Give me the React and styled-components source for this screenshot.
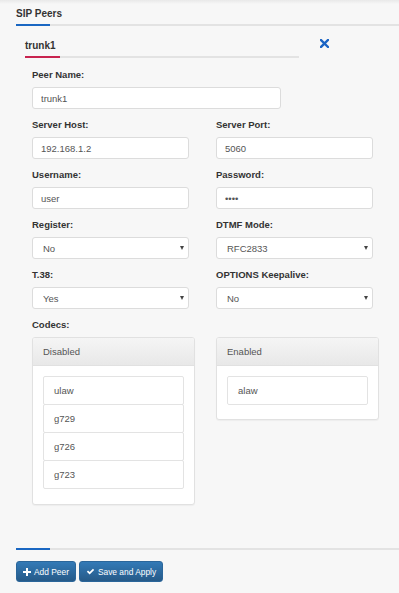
import React from "react";
import styled, { createGlobalStyle } from "styled-components";

const GlobalStyle = createGlobalStyle`
  html, body {
    margin: 0;
    padding: 0;
    background: #f7f7f7;
    font-family: "Liberation Sans", Arial, sans-serif;
    color: #333;
  }
`;

const Page = styled.div`
  position: relative;
  padding: 0 0 0 16px;
  min-height: 593px;
  box-sizing: border-box;
  &:before {
    content: "";
    position: absolute;
    left: 0;
    right: 0;
    top: 0;
    height: 4px;
    background: linear-gradient(#e9e9e9, rgba(247, 247, 247, 0));
  }
`;

const TabLine = styled.div`
  position: relative;
  border-bottom: 2px solid #e3e3e3;
  &:after {
    content: "";
    position: absolute;
    left: 0;
    bottom: -2px;
    width: ${p => p.$w}px;
    height: 2px;
    background: ${p => p.$color};
  }
`;

const Title = styled(TabLine)`
  padding: 7px 0 3px;
  font-size: 10px;
  line-height: 14px;
  font-weight: bold;
  color: #333;
`;

const PeerHead = styled.div`
  display: flex;
  align-items: flex-start;
  margin: 13px 0 0 9px;
`;

const PeerTitle = styled(TabLine)`
  width: 274px;
  padding-bottom: 3px;
  font-size: 10px;
  line-height: 14px;
  font-weight: bold;
`;

const CloseButton = styled.button`
  margin: 0 0 0 21px;
  padding: 0;
  border: 0;
  background: none;
  display: flex;
  cursor: pointer;
`;

const Form = styled.div`
  padding: 10px 0 0 16px;
`;

const Row = styled.div`
  display: grid;
  grid-template-columns: 157px 157px;
  column-gap: 27px;
`;

const Group = styled.div`
  margin-bottom: 9px;
  width: ${p => (p.$wide ? "249px" : "auto")};
`;

const Label = styled.label`
  display: block;
  font-size: 9.5px;
  line-height: 14px;
  font-weight: bold;
  color: #333;
  margin-bottom: 5px;
`;

const Input = styled.input`
  display: block;
  box-sizing: border-box;
  width: 100%;
  height: 22px;
  margin: 0;
  padding: 0 8px;
  border: 1px solid #dcdcdc;
  border-radius: 3px;
  background: #fff;
  font-family: inherit;
  font-size: 9.5px;
  color: #555;
  outline: none;
`;

const SelectWrap = styled.div`
  position: relative;
`;

const Select = styled.select`
  display: block;
  box-sizing: border-box;
  width: 100%;
  height: 22px;
  margin: 0;
  padding: 0 10px;
  border: 1px solid #dcdcdc;
  border-radius: 3px;
  background: #fff;
  font-family: inherit;
  font-size: 9.5px;
  color: #555;
  appearance: none;
  outline: none;
`;

const Caret = styled.span`
  position: absolute;
  right: 5px;
  top: 9px;
  width: 0;
  height: 0;
  border-left: 2.5px solid transparent;
  border-right: 2.5px solid transparent;
  border-top: 4px solid #444;
  pointer-events: none;
`;

const Codecs = styled.div`
  display: grid;
  grid-template-columns: 163px 163px;
  column-gap: 21px;
  align-items: start;
`;

const Panel = styled.div`
  background: #fff;
  border: 1px solid #e1e1e1;
  border-radius: 3px;
  box-shadow: 0 1px 1px rgba(0, 0, 0, 0.04);
  overflow: hidden;
`;

const PanelHead = styled.div`
  height: 27px;
  padding: 0 10px;
  display: flex;
  align-items: center;
  background: linear-gradient(#f5f5f5, #e8e8e8);
  border-bottom: 1px solid #e1e1e1;
  font-size: 9.5px;
  color: #555;
`;

const PanelBody = styled.div`
  padding: 10px 10px ${p => p.$bottom}px;
`;

const ListItem = styled.div`
  box-sizing: border-box;
  height: 29px;
  display: flex;
  align-items: center;
  padding: 0 10px;
  border: 1px solid #e3e3e3;
  border-radius: 2px;
  font-size: 9.5px;
  color: #555;
  background: #fff;
  &:not(:first-child) {
    margin-top: -1px;
  }
`;

const Footer = styled(TabLine)`
  margin-top: 43px;
`;

const Buttons = styled.div`
  display: flex;
  gap: 3px;
  margin-top: 11px;
`;

const Button = styled.button`
  height: 21px;
  padding: 0 6px;
  display: flex;
  align-items: center;
  gap: 3px;
  border: 1px solid #2b669a;
  border-radius: 3px;
  background: linear-gradient(#337ab7, #265a88);
  color: #fff;
  font-family: inherit;
  font-size: 8.4px;
  cursor: pointer;
`;

const PlusIcon = () => (
  <svg width="8" height="8" viewBox="0 0 8 8">
    <path d="M3 0h2v3h3v2H5v3H3V5H0V3h3z" fill="#fff" />
  </svg>
);

const CheckIcon = () => (
  <svg width="9" height="7" viewBox="0 0 10 8">
    <path d="M0.8 4.2l1.4-1.4 1.8 1.8L7.8 0.8l1.4 1.4L4 7.4z" fill="#fff" />
  </svg>
);

const CloseIcon = () => (
  <svg width="9" height="9" viewBox="0 0 9 9">
    <path d="M1 1l7 7M8 1l-7 7" stroke="#1b64c4" strokeWidth="2.4" strokeLinecap="square" />
  </svg>
);

const Field = ({ label, value, type = "text", wide }) => (
  <Group $wide={wide}>
    <Label>{label}</Label>
    <Input type={type} defaultValue={value} />
  </Group>
);

const Choice = ({ label, value, options }) => (
  <Group>
    <Label>{label}</Label>
    <SelectWrap>
      <Select defaultValue={value}>
        {options.map(o => (
          <option key={o}>{o}</option>
        ))}
      </Select>
      <Caret />
    </SelectWrap>
  </Group>
);

const CodecPanel = ({ title, items, bottom }) => (
  <Panel>
    <PanelHead>{title}</PanelHead>
    <PanelBody $bottom={bottom}>
      {items.map(c => (
        <ListItem key={c}>{c}</ListItem>
      ))}
    </PanelBody>
  </Panel>
);

export default function App() {
  return (
    <Page>
      <GlobalStyle />
      <Title $w={34} $color="#1a67c2">SIP Peers</Title>
      <PeerHead>
        <PeerTitle $w={35} $color="#c8234f">trunk1</PeerTitle>
        <CloseButton aria-label="Remove peer">
          <CloseIcon />
        </CloseButton>
      </PeerHead>
      <Form>
        <Field label="Peer Name:" value="trunk1" wide />
        <Row>
          <Field label="Server Host:" value="192.168.1.2" />
          <Field label="Server Port:" value="5060" />
          <Field label="Username:" value="user" />
          <Field label="Password:" value="pass" type="password" />
          <Choice label="Register:" value="No" options={["No", "Yes"]} />
          <Choice label="DTMF Mode:" value="RFC2833" options={["RFC2833", "Inband", "Info"]} />
          <Choice label="T.38:" value="Yes" options={["Yes", "No"]} />
          <Choice label="OPTIONS Keepalive:" value="No" options={["No", "Yes"]} />
        </Row>
        <Label>Codecs:</Label>
        <Codecs>
          <CodecPanel title="Disabled" items={["ulaw", "g729", "g726", "g723"]} bottom={15} />
          <CodecPanel title="Enabled" items={["alaw"]} bottom={14} />
        </Codecs>
      </Form>
      <Footer $w={34} $color="#1a67c2" />
      <Buttons>
        <Button>
          <PlusIcon /> Add Peer
        </Button>
        <Button>
          <CheckIcon /> Save and Apply
        </Button>
      </Buttons>
    </Page>
  );
}
